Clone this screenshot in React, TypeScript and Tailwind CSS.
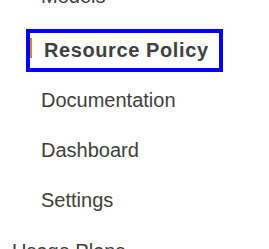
const items = ["Documentation", "Dashboard", "Settings"];

export default function App() {
  return (
    <div className="w-[269px] h-[249px] overflow-hidden bg-white text-[#404040] font-['Liberation_Sans',Arial,sans-serif] text-[20px]">
      <div className="-mt-[33px]">
        <div className="h-[58px] pl-[41px] flex items-center">Models</div>
        <div className="h-[50px] pl-[26px] flex items-center">
          <div className="w-[197px] h-[43px] border-[4px] border-[#0000ff] flex items-center">
            <span className="w-[2px] h-[20px] mb-[4px] bg-[#e8820c]" />
            <span className="ml-[12px] font-bold tracking-[0.6px]">Resource Policy</span>
          </div>
        </div>
        {items.map((t) => (
          <div key={t} className="h-[50px] pl-[41px] flex items-center">
            {t}
          </div>
        ))}
        <div className="h-[52px] pl-[12px] flex items-center">Usage Plans</div>
      </div>
    </div>
  );
}
